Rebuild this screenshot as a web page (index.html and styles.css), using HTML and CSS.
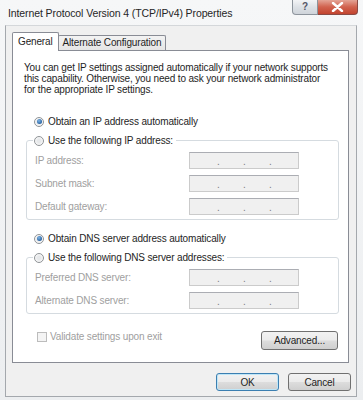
FILE: index.html
```html
<!DOCTYPE html>
<html>
    <head>
        <meta charset="utf-8"/>
        <title>Internet Protocol Version 4 (TCP/IPv4) Properties</title>
        <link rel="stylesheet" href="styles.css">
    </head>
    <body>
        <div class="window">
            <div class="titlebar">
                <span class="caption">Internet Protocol Version 4 (TCP/IPv4) Properties</span>
                <div class="sysbtns">
                    <span class="help">?</span>
                    <span class="close">
                        <svg width="13" height="10" viewBox="0 0 13 10"><path d="M2 1 L11 9 M11 1 L2 9" stroke="#fff" stroke-width="2.4" stroke-linecap="round"/></svg>
                    </span>
                </div>
            </div>
            <div class="client">
                <div class="tabs">
                    <div class="tab active">General</div>
                    <div class="tab">Alternate Configuration</div>
                </div>
                <div class="panel">
                    <p class="intro">You can get IP settings assigned automatically if your network supports<br/>this capability. Otherwise, you need to ask your network administrator<br/>for the appropriate IP settings.</p>
                    <div class="opt first"><span class="radio on"></span>Obtain an IP address automatically</div>
                    <div class="group">
                        <div class="legend"><span class="radio"></span>Use the following IP address:</div>
                        <div class="fields">
                            <span class="lbl">IP address:</span><span class="ip"><i>.</i><i>.</i><i>.</i></span>
                            <span class="lbl">Subnet mask:</span><span class="ip"><i>.</i><i>.</i><i>.</i></span>
                            <span class="lbl">Default gateway:</span><span class="ip"><i>.</i><i>.</i><i>.</i></span>
                        </div>
                    </div>
                    <div class="opt"><span class="radio on"></span>Obtain DNS server address automatically</div>
                    <div class="group">
                        <div class="legend"><span class="radio"></span>Use the following DNS server addresses:</div>
                        <div class="fields">
                            <span class="lbl">Preferred DNS server:</span><span class="ip"><i>.</i><i>.</i><i>.</i></span>
                            <span class="lbl">Alternate DNS server:</span><span class="ip"><i>.</i><i>.</i><i>.</i></span>
                        </div>
                    </div>
                    <div class="foot">
                        <div class="check"><span class="box"></span>Validate settings upon exit</div>
                        <button class="btn adv">Advanced...</button>
                    </div>
                </div>
                <div class="actions">
                    <button class="btn ok">OK</button>
                    <button class="btn">Cancel</button>
                </div>
            </div>
        </div>
    </body>
</html>
```
FILE: styles.css
```css
body{margin:0;padding:0;background:#fff;font-family:'Liberation Sans',Arial,sans-serif;font-size:10px;letter-spacing:-0.15px;color:#1e1e1e;}
.window{width:363px;height:400px;background:linear-gradient(#f6f7f8,#eceef0);box-sizing:border-box;overflow:hidden;}
.titlebar{height:25px;display:flex;align-items:flex-start;justify-content:space-between;}
.caption{font-size:10.5px;letter-spacing:-0.1px;padding:7px 0 0 8px;color:#262626;}
.sysbtns{display:flex;margin-right:5px;}
.help{width:26px;height:15px;box-sizing:border-box;border:1px solid #8d949c;border-top:none;border-radius:0 0 0 4px;background:linear-gradient(#f3f4f6,#dde1e6 50%,#cfd4da);color:#556;font-size:10px;font-weight:bold;text-align:center;line-height:14px;}
.close{width:40px;height:15px;box-sizing:border-box;border:1px solid #8a4a44;border-left:none;border-top:none;border-radius:0 0 4px 0;background:linear-gradient(#e4a496,#d1624e 50%,#c2442f);display:flex;align-items:center;justify-content:center;}
.client{margin:0 6px 0 5px;height:372px;box-sizing:border-box;border:1px solid #a4a8ad;border-top-color:#d4d7da;background:#f0f0f0;}
.tabs{display:flex;align-items:flex-end;padding:6px 0 0 6px;height:18px;}
.tab{height:15px;line-height:14px;box-sizing:border-box;border:1px solid #898c95;border-bottom:none;padding:0 4px;background:linear-gradient(#f3f3f3,#e5e5e5);border-radius:2px 2px 0 0;margin-left:-1px;}
.tab.active{height:19px;line-height:18px;background:#fff;position:relative;z-index:1;margin-bottom:-1px;padding:0 5px;margin-left:0;}
.panel{margin:0 7px 0 6px;height:313px;box-sizing:border-box;border:1px solid #898c95;background:#fff;}
.intro{margin:0;padding:11px 0 0 11px;line-height:11px;}
.opt{display:flex;align-items:center;height:13px;margin:12px 0 0 21px;}
.opt.first{margin-top:20px;}
.radio{width:10px;height:10px;box-sizing:border-box;border-radius:50%;border:1px solid #8f9396;background:radial-gradient(circle,#e6e8ea 30%,#f8f8f8 70%);margin-right:4px;display:flex;align-items:center;justify-content:center;}
.radio.on::after{content:'';width:5px;height:5px;border-radius:50%;background:radial-gradient(circle at 40% 35%,#7fb5e6,#1f5a9a 80%);}
.group{margin:12px 9px 0 13px;border:1px solid #d5dbe0;border-radius:3px;padding:0 0 4px 0;}
.legend{display:flex;width:max-content;align-items:center;height:13px;margin:-7px 0 0 6px;padding:0 3px 0 1px;background:#fff;}
.fields{display:grid;grid-template-columns:154px 110px;grid-auto-rows:17px;row-gap:6px;align-items:center;padding:5px 0 0 8px;}
.lbl{color:#a0a0a0;}
.ip{height:17px;box-sizing:border-box;border:1px solid #cbcbcb;border-top-color:#abadb3;background:#f0f0f0;display:flex;gap:23px;padding-left:27px;line-height:18px;color:#7c7c7c;}
.ip i{font-style:normal;width:3px;}
.foot{display:flex;align-items:flex-start;justify-content:space-between;margin:17px 10px 0 24px;}
.check{display:flex;align-items:center;height:11px;color:#a0a0a0;}
.box{width:10px;height:10px;box-sizing:border-box;border:1px solid #bcbcbc;background:#f4f4f4;margin-right:3px;}
.btn{font-family:'Liberation Sans',Arial,sans-serif;font-size:10px;letter-spacing:-0.15px;color:#1e1e1e;height:19px;box-sizing:border-box;border:1px solid #707070;border-radius:3px;background:linear-gradient(#f2f2f2,#ebebeb 49%,#dddddd 51%,#cfcfcf);padding:0;}
.adv{width:77px;}
.actions{display:flex;justify-content:flex-end;gap:9px;padding:10px 5px 0 0;}
.actions .btn{width:63px;height:18px;}
.btn.ok{border-color:#3c7fb1;box-shadow:inset 0 0 0 1px #bfe6f7;}
```
